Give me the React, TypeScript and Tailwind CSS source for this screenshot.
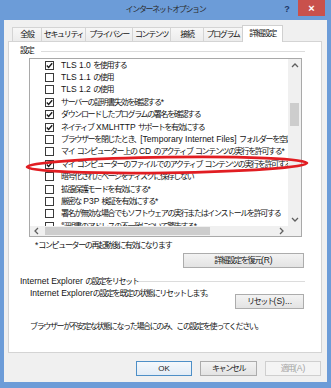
import React from "react";

function J({ t }: { t: string }) {
  const parts = t.split(/([\x20-\x7E]+)/).filter((p) => p.length > 0);
  return (
    <>
      {parts.map((p, i) =>
        /^[\x20-\x7E]+$/.test(p) ? (
          <span key={i} className="tracking-[0px] text-[8.5px]">
            {p}
          </span>
        ) : (
          <span key={i} className="tracking-[-1.35px]">
            {p}
          </span>
        )
      )}
    </>
  );
}

const rows: { c: boolean; t: string }[] = [
  { c: true, t: "TLS 1.0 を使用する" },
  { c: false, t: "TLS 1.1 の使用" },
  { c: false, t: "TLS 1.2 の使用" },
  { c: true, t: "サーバーの証明書失効を確認する*" },
  { c: true, t: "ダウンロードしたプログラムの署名を確認する" },
  { c: true, t: "ネイティブ XMLHTTP サポートを有効にする" },
  { c: false, t: "ブラウザーを閉じたとき、[Temporary Internet Files] フォルダーを空にする" },
  { c: false, t: "マイ コンピューター上の CD のアクティブ コンテンツの実行を許可する*" },
  { c: true, t: "マイ コンピューターのファイルでのアクティブ コンテンツの実行を許可する*" },
  { c: false, t: "暗号化されたページをディスクに保存しない" },
  { c: false, t: "拡張保護モードを有効にする*" },
  { c: false, t: "厳密な P3P 検証を有効にする*" },
  { c: false, t: "署名が無効な場合でもソフトウェアの実行またはインストールを許可する" },
  { c: false, t: "証明書のアドレスの不一致について警告する*" },
];

const tabs: { t: string; w: string; sel?: boolean }[] = [
  { t: "全般", w: "w-[29px]" },
  { t: "セキュリティ", w: "w-[44px]" },
  { t: "プライバシー", w: "w-[47px]" },
  { t: "コンテンツ", w: "w-[38px]" },
  { t: "接続", w: "w-[33px]" },
  { t: "プログラム", w: "w-[39px]" },
  { t: "詳細設定", w: "w-[41px]", sel: true },
];

function Chevron({ dir }: { dir: "up" | "down" | "left" | "right" }) {
  const pts =
    dir === "up"
      ? "1,5 4,2 7,5"
      : dir === "down"
      ? "1,2 4,5 7,2"
      : dir === "left"
      ? "5,1 2,4 5,7"
      : "2,1 5,4 2,7";
  return (
    <svg width="8" height="8" viewBox="0 0 8 8">
      <polyline points={pts} fill="none" stroke="#5f5f5f" strokeWidth="1.3" />
    </svg>
  );
}

function Btn({
  children,
  w,
  variant,
}: {
  children: React.ReactNode;
  w: string;
  variant?: "default" | "disabled";
}) {
  const base = "h-[15px] flex items-center justify-center border " + w;
  if (variant === "default")
    return (
      <div className={base + " border-[#4d8fc7] bg-linear-to-b from-[#f4f8fc] to-[#e2ecf6] text-[#1b1b1b]"}>
        {children}
      </div>
    );
  if (variant === "disabled")
    return (
      <div className={base + " border-[#cfcfcf] bg-[#f4f4f4] text-[#a3a3a3]"}>{children}</div>
    );
  return (
    <div className={base + " border-[#acacac] bg-linear-to-b from-[#f3f3f3] to-[#e3e3e3] text-[#1b1b1b]"}>
      {children}
    </div>
  );
}

export default function App() {
  return (
    <div className="relative w-[331px] h-[388px] bg-[#6c9cd8] flex flex-col font-['Liberation_Sans','Noto_Sans_CJK_JP',sans-serif] text-[8px] leading-none text-[#141414] overflow-hidden">
      {/* title bar */}
      <div className="h-[20px] flex shrink-0">
        <div className="w-[49px]" />
        <div className="flex-1 flex items-center justify-center text-[#2b2b2b] pb-[1px]">
          <J t="インターネット オプション" />
        </div>
        <div className="w-[49px] flex items-start pr-[6px]">
          <div className="w-[10px] mt-[5px] text-center text-[9px] font-bold text-[#1d3768]">?</div>
          <div className="ml-[6px] w-[27px] h-[16px] bg-[#c9514c] flex items-center justify-center text-white text-[11px] font-bold">
            ×
          </div>
        </div>
      </div>

      {/* client */}
      <div className="flex-1 ml-[4px] mr-[4px] mb-[6px] bg-[#f0f0f0] flex flex-col">
        {/* tabs */}
        <div className="h-[21px] flex items-end pl-[8px] relative z-10">
          {tabs.map((tb, i) =>
            tb.sel ? (
              <div
                key={i}
                className={
                  tb.w +
                  " h-[17px] -mb-px bg-white border border-b-0 border-[#d0d0d0] flex items-center justify-center pb-[1px]"
                }
              >
                <J t={tb.t} />
              </div>
            ) : (
              <div
                key={i}
                className={
                  tb.w +
                  " h-[14px] bg-linear-to-b from-[#f7f7f7] to-[#ececec] border-t border-l border-[#d4d4d4] flex items-center justify-center"
                }
              >
                <J t={tb.t} />
              </div>
            )
          )}
        </div>

        {/* panel */}
        <div className="ml-[4px] mr-[5px] h-[312px] bg-white border border-[#d4d4d4] flex flex-col">
          <div className="mt-[4px] h-[10px] flex items-center">
            <div className="ml-[11px]">
              <J t="設定" />
            </div>
            <div className="flex-1 ml-[8px] mr-[16px] h-px bg-[#dcdcdc]" />
          </div>

          {/* list box */}
          <div className="mt-[2px] ml-[20px] w-[273px] h-[179px] border border-[#a9a9a9] flex flex-col">
            <div className="flex-1 flex min-h-0">
              <div className="flex-1 overflow-hidden">
                {rows.map((r, i) => (
                  <div key={i} className="h-[12.4px] flex items-center pl-[15px] whitespace-nowrap">
                    <div className="w-[9px] h-[9px] shrink-0 border border-[#3a3a3a] bg-white flex items-center justify-center">
                      {r.c && (
                        <svg width="7" height="7" viewBox="0 0 7 7">
                          <polyline
                            points="0.8,3.6 2.6,5.4 6.2,1.2"
                            fill="none"
                            stroke="#1a1a1a"
                            strokeWidth="1.4"
                          />
                        </svg>
                      )}
                    </div>
                    <div className="ml-[7px]">
                      <J t={r.t} />
                    </div>
                  </div>
                ))}
              </div>
              <div className="w-[13px] bg-[#f0f0f0] flex flex-col items-center">
                <div className="h-[13px] flex items-center justify-center">
                  <Chevron dir="up" />
                </div>
                <div className="h-[31px]" />
                <div className="w-[9px] h-[23px] bg-[#cdcdcd]" />
                <div className="flex-1" />
                <div className="h-[13px] flex items-center justify-center">
                  <Chevron dir="down" />
                </div>
              </div>
            </div>
            <div className="h-[10px] flex">
              <div className="flex-1 bg-[#f0f0f0] flex items-center">
                <div className="w-[13px] flex items-center justify-center">
                  <Chevron dir="left" />
                </div>
                <div className="ml-[2px] w-[165px] h-[8px] bg-[#cdcdcd]" />
                <div className="flex-1" />
                <div className="w-[13px] flex items-center justify-center">
                  <Chevron dir="right" />
                </div>
              </div>
              <div className="w-[13px] bg-[#f0f0f0]" />
            </div>
          </div>

          <div className="mt-[4px] ml-[26px] h-[9px] flex items-center">
            <J t="*コンピューターの再起動後に有効になります" />
          </div>

          <div className="mt-[3px] self-end mr-[17px]">
            <Btn w="w-[121px]">
              <J t="詳細設定を復元(R)" />
            </Btn>
          </div>

          <div className="mt-[8px] h-[10px] flex items-center">
            <div className="ml-[11px] whitespace-nowrap">
              <J t="Internet Explorer の設定をリセット" />
            </div>
            <div className="flex-1 ml-[1px] mr-[16px] h-px bg-[#dcdcdc]" />
          </div>

          <div className="mt-[3px] flex items-start">
            <div className="ml-[21px] h-[9px] flex items-center whitespace-nowrap">
              <J t="Internet Explorer の設定を既定の状態にリセットします。" />
            </div>
            <div className="ml-auto mr-[17px] mt-[5px]">
              <Btn w="w-[69px]">
                <J t="リセット(S)..." />
              </Btn>
            </div>
          </div>

          <div className="mt-[13px] ml-[21px] h-[9px] flex items-center whitespace-nowrap">
            <J t="ブラウザーが不安定な状態になった場合にのみ、この設定を使ってください。" />
          </div>
        </div>

        {/* footer */}
        <div className="mt-[8px] mr-[6px] flex justify-end gap-[8px]">
          <Btn w="w-[56px]" variant="default">
            OK
          </Btn>
          <Btn w="w-[57px]">
            <J t="キャンセル" />
          </Btn>
          <Btn w="w-[56px]" variant="disabled">
            <J t="適用(A)" />
          </Btn>
        </div>
      </div>

      {/* red annotation ellipse */}
      <svg className="absolute inset-0 pointer-events-none" width="331" height="388" viewBox="0 0 331 388">
        <ellipse
          cx="167"
          cy="165"
          rx="140"
          ry="7.8"
          transform="rotate(-0.8 167 165)"
          fill="none"
          stroke="#e11d22"
          strokeWidth="2.8"
        />
      </svg>
    </div>
  );
}
